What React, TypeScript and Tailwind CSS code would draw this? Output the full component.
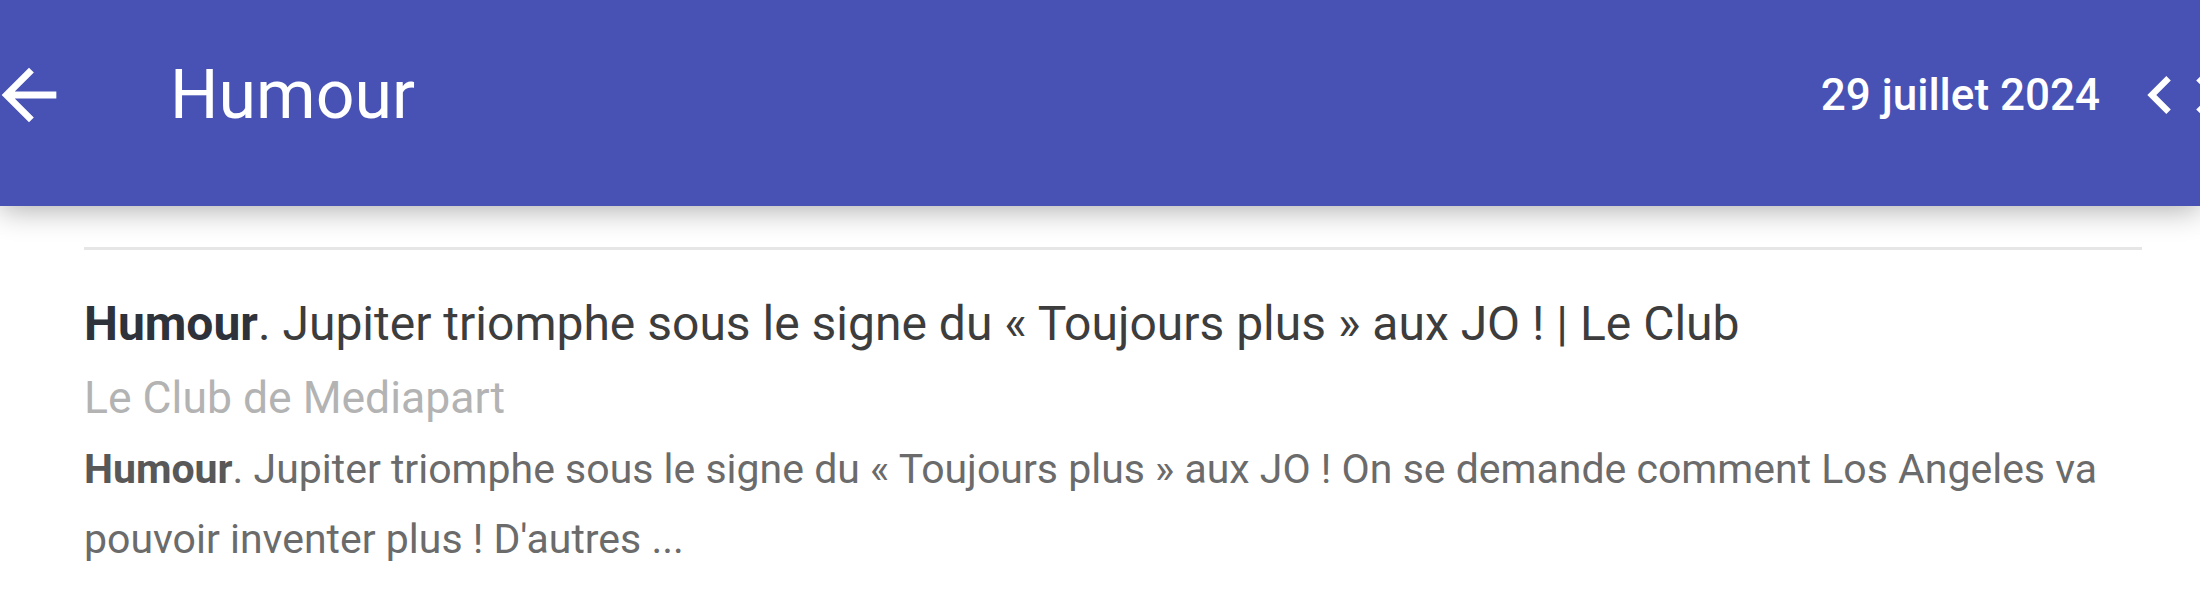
import React from "react";

function BackArrow() {
  return (
    <svg viewBox="0 0 24 24" className="w-[82px] h-[82px] -ml-[12px] shrink-0 fill-white">
      <path d="M20 11H7.83l5.59-5.59L12 4l-8 8 8 8 1.41-1.41L7.83 13H20v-2z" />
    </svg>
  );
}

function ChevronLeft() {
  return (
    <svg viewBox="0 0 24 24" className="w-[76px] h-[76px] shrink-0 fill-white">
      <path d="M15.41 7.41L14 6l-6 6 6 6 1.41-1.41L10.83 12z" />
    </svg>
  );
}

function ChevronRight() {
  return (
    <svg viewBox="0 0 24 24" className="w-[76px] h-[76px] shrink-0 fill-white">
      <path d="M10 6L8.59 7.41 13.17 12l-4.58 4.59L10 18l6-6z" />
    </svg>
  );
}

export default function App() {
  return (
    <div className="min-h-screen bg-white overflow-hidden font-['Roboto',_'Noto_Sans',_sans-serif]">
      {/* Toolbar */}
      <header className="relative z-10 h-[206px] pb-[16px] bg-[#4752b4] flex items-center overflow-hidden shadow-[0_4px_28px_rgba(0,0,0,0.32)]">
        <BackArrow />
        <h1 className="ml-[100px] text-[68px] leading-none text-white">Humour</h1>
        <div className="ml-auto -mr-[45px] flex items-center text-white">
          <span className="text-[44px] font-medium leading-none">29 juillet 2024</span>
          <div className="ml-[22px]">
            <ChevronLeft />
          </div>
          <div className="-ml-[29px]">
            <ChevronRight />
          </div>
        </div>
      </header>

      {/* Results */}
      <main className="ml-[84px] mr-[58px]">
        <div className="mt-[41px] h-[3px] bg-[#e6e6e6]" />

        <article className="pt-[42px]">
          <h2 className="text-[48px] leading-[64px] text-[#3d3d3d]">
            <span className="font-bold text-[#2e323a]">Humour</span>
            <span>. Jupiter triomphe sous le signe du « Toujours plus » aux JO ! | Le Club</span>
          </h2>
          <p className="mt-[12px] text-[44.5px] leading-[60px] text-[#b3b3b3]">Le Club de Mediapart</p>
          <p className="mt-[6px] text-[41px] leading-[70px] text-[#6b6b6b]">
            <span className="font-bold text-[#585858]">Humour</span>
            <span>. Jupiter triomphe sous le signe du « Toujours plus » aux JO ! On se demande comment Los Angeles va pouvoir inventer plus ! D'autres ...</span>
          </p>
        </article>
      </main>
    </div>
  );
}
